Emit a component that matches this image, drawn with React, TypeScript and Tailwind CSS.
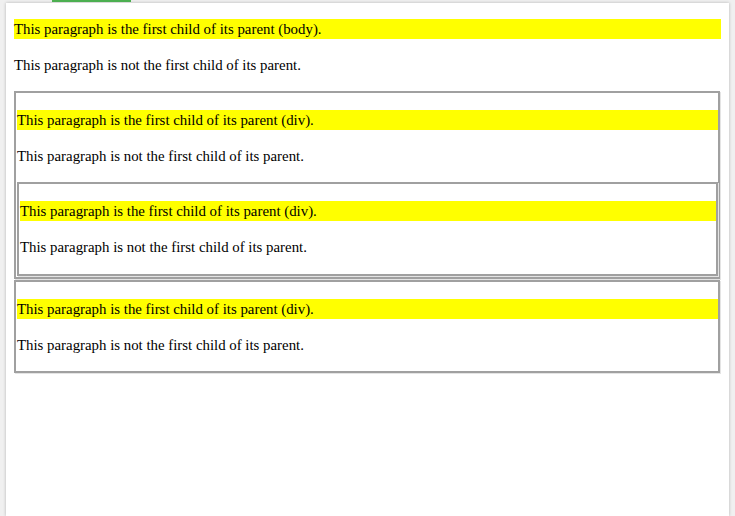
export default function App() {
  const serif = { fontFamily: '"Liberation Serif", "Times New Roman", serif' };
  const First = ({ label }: { label: string }) => (
    <p className="bg-[#ffff00] text-[14.85px] leading-[20px] h-[20px] text-black whitespace-nowrap">
      This paragraph is the first child of its parent ({label}).
    </p>
  );
  const Other = () => (
    <p className="text-[14.85px] leading-[20px] h-[20px] text-black whitespace-nowrap">
      This paragraph is not the first child of its parent.
    </p>
  );
  return (
    <div className="w-[735px] h-[516px] bg-[#f0f0f0] overflow-hidden relative" style={serif}>
      <div className="absolute left-[52px] top-0 w-[79px] h-[2px] bg-[#4caf50]" />
      <div className="ml-[6px] mt-[3px] w-[723px] h-[513px] bg-white shadow-[0_0_3px_rgba(0,0,0,0.25)] px-[8px] pt-[16px] flex flex-col">
        <First label="body" />
        <div className="mt-[16px]">
          <Other />
        </div>
        <div className="mt-[16px] w-[706px] border-2 border-[#a0a0a0] pl-px pt-[17px] pb-px shadow-[1px_1px_0_#e4e4e4] flex flex-col">
          <First label="div" />
          <div className="mt-[16px]">
            <Other />
          </div>
          <div className="mt-[16px] w-[701px] border-2 border-[#a0a0a0] pl-px pt-[17px] pb-[17px] shadow-[1px_1px_0_#e4e4e4] flex flex-col">
            <First label="div" />
            <div className="mt-[16px]">
              <Other />
            </div>
          </div>
        </div>
        <div className="mt-px w-[706px] border-2 border-[#a0a0a0] pl-px pt-[17px] pb-[16px] shadow-[1px_1px_0_#e4e4e4] flex flex-col">
          <First label="div" />
          <div className="mt-[16px]">
            <Other />
          </div>
        </div>
      </div>
    </div>
  );
}
